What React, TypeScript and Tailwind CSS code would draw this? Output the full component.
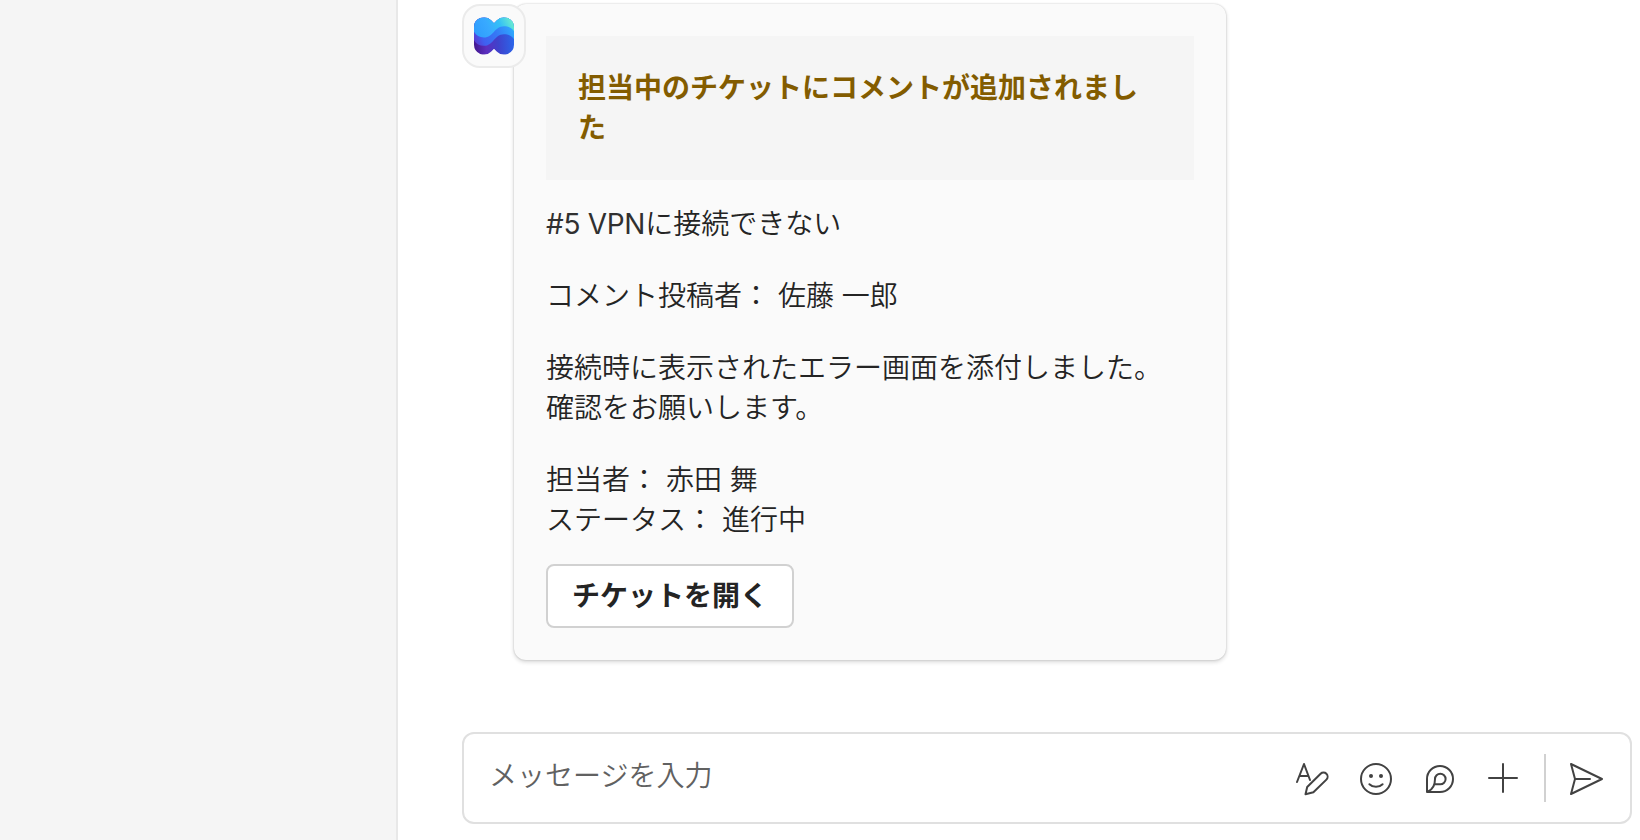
import type { ReactNode } from "react"

function BotLogo() {
    return (
        <svg viewBox="0 0 120 113" className="h-[38px] w-10">
            <defs>
                <clipPath id="shape">
                    <path d="M0 30A30 30 0 0 1 51 9L60 18 69 9A30 30 0 0 1 120 30V83A30 30 0 0 1 69 104L60 95 51 104A30 30 0 0 1 0 83Z" />
                </clipPath>
                <linearGradient id="top" gradientUnits="userSpaceOnUse" x1="10" y1="60" x2="118" y2="8">
                    <stop offset="0" stopColor="#2f9dfd" />
                    <stop offset="0.35" stopColor="#38a9ff" />
                    <stop offset="0.65" stopColor="#33c0f6" />
                    <stop offset="1" stopColor="#70f0cc" />
                </linearGradient>
                <linearGradient id="middle" gradientUnits="userSpaceOnUse" x1="0" y1="80" x2="112" y2="35">
                    <stop offset="0" stopColor="#5b35cc" />
                    <stop offset="0.25" stopColor="#405ff0" />
                    <stop offset="0.6" stopColor="#3578f6" />
                    <stop offset="1" stopColor="#2fa4fd" />
                </linearGradient>
                <linearGradient id="bottom" gradientUnits="userSpaceOnUse" x1="0" y1="85" x2="120" y2="75">
                    <stop offset="0" stopColor="#431890" />
                    <stop offset="0.3" stopColor="#5c2fbf" />
                    <stop offset="0.6" stopColor="#3f42cc" />
                    <stop offset="1" stopColor="#2b66ea" />
                </linearGradient>
            </defs>
            <g clipPath="url(#shape)">
                <path fill="url(#bottom)" d="M0 0H120V113H0Z" />
                <path fill="url(#middle)" d="M0 0H120V66C114 56 103 51 90 51C61 51 58 86 30 86C17 86 6 80 0 69Z" />
                <path fill="url(#top)" d="M0 0H120V42C114 32 103 27 90 27C61 27 58 61 30 61C17 61 6 55 0 44Z" />
            </g>
        </svg>
    )
}

function ToolIcon({ children }: { children: ReactNode }) {
    return (
        <svg
            viewBox="0 0 40 40"
            className="size-10"
            fill="none"
            stroke="#424242"
            strokeWidth={2}
            strokeLinecap="round"
            strokeLinejoin="round"
        >
            {children}
        </svg>
    )
}

function Composer() {
    return (
        <div className="mr-2 flex h-[92px] items-center rounded-xl border-2 border-[#e0e0e0] bg-white pr-6 pl-[25px]">
            <span className="-mt-1 flex-1 text-[#616161]">メッセージを入力</span>
            <div className="mt-0.5 flex items-center gap-6">
                <ToolIcon>
                    <path d="M5 23L12 5l6 16M8 17h8.4" />
                    <path d="M13.5 35.2L15.2 28 28.6 14.8a4.1 4.1 0 0 1 5.8 5.8L21.4 33.2Z" />
                </ToolIcon>
                <ToolIcon>
                    <circle cx="20" cy="20" r="15" />
                    <path d="M13.4 25.2a9.5 9.5 0 0 0 13.2 0" />
                    <circle cx="15" cy="17" r="2" fill="#424242" stroke="none" />
                    <circle cx="25" cy="17" r="2" fill="#424242" stroke="none" />
                </ToolIcon>
                <ToolIcon>
                    <path d="M7 33V20a13 13 0 1 1 13 13Z" />
                    <path d="M8 32.5c4.6-2 7-5.5 7-12.5a5.3 5.3 0 1 1 5.3 5.3H14.6" />
                </ToolIcon>
                <ToolIcon>
                    <path d="M19 5v28M5 19h28" />
                </ToolIcon>
            </div>
            <div className="mx-5 h-12 w-0.5 bg-[#d1d1d1]" />
            <div className="mt-0.5">
                <ToolIcon>
                    <path d="M5 5l31 15L5 35l4-15ZM9 20h15" />
                </ToolIcon>
            </div>
        </div>
    )
}

function TicketCard() {
    return (
        <section className="ml-[52px] h-[656px] w-[712px] rounded-xl bg-[#fafafa] p-8 shadow-[0_0_2px_rgba(0,0,0,0.2),0_2px_4px_rgba(0,0,0,0.16)]">
            <div className="h-36 bg-[#f5f5f5] p-8">
                <h1 className="font-bold text-[#835c00]">担当中のチケットにコメントが追加されました</h1>
            </div>
            <div className="mt-6 flex flex-col gap-8">
                <p>
                    <span className="font-normal tracking-[-0.3px] text-[#303030]">#5 VPN</span>に接続できない
                </p>
                <p>コメント投稿者： 佐藤 一郎</p>
                <p>
                    接続時に表示されたエラー画面を添付しました。
                    <br />
                    確認をお願いします。
                </p>
                <p>
                    担当者： 赤田 舞
                    <br />
                    ステータス： 進行中
                </p>
            </div>
            <button className="mt-6 flex h-16 w-[248px] items-center justify-center rounded-lg border-2 border-[#d1d1d1] bg-white font-bold">
                チケットを開く
            </button>
        </section>
    )
}

function App() {
    return (
        <div className="flex h-[840px] w-[1640px] overflow-hidden bg-white font-[Inter,'Noto_Sans_CJK_JP',sans-serif] text-[28px] leading-10 font-[350] text-[#242424]">
            <aside className="w-[398px] shrink-0 border-r-2 border-[#e8e8e8] bg-[#f5f5f5]" />
            <main className="flex flex-1 flex-col justify-between pt-1 pb-4 pl-16">
                <div className="relative">
                    <TicketCard />
                    <div className="absolute top-0 left-0 flex size-16 items-center justify-center rounded-[18px] border-2 border-[#ebebeb] bg-[#fafafa]">
                        <BotLogo />
                    </div>
                </div>
                <Composer />
            </main>
        </div>
    )
}

export default App
